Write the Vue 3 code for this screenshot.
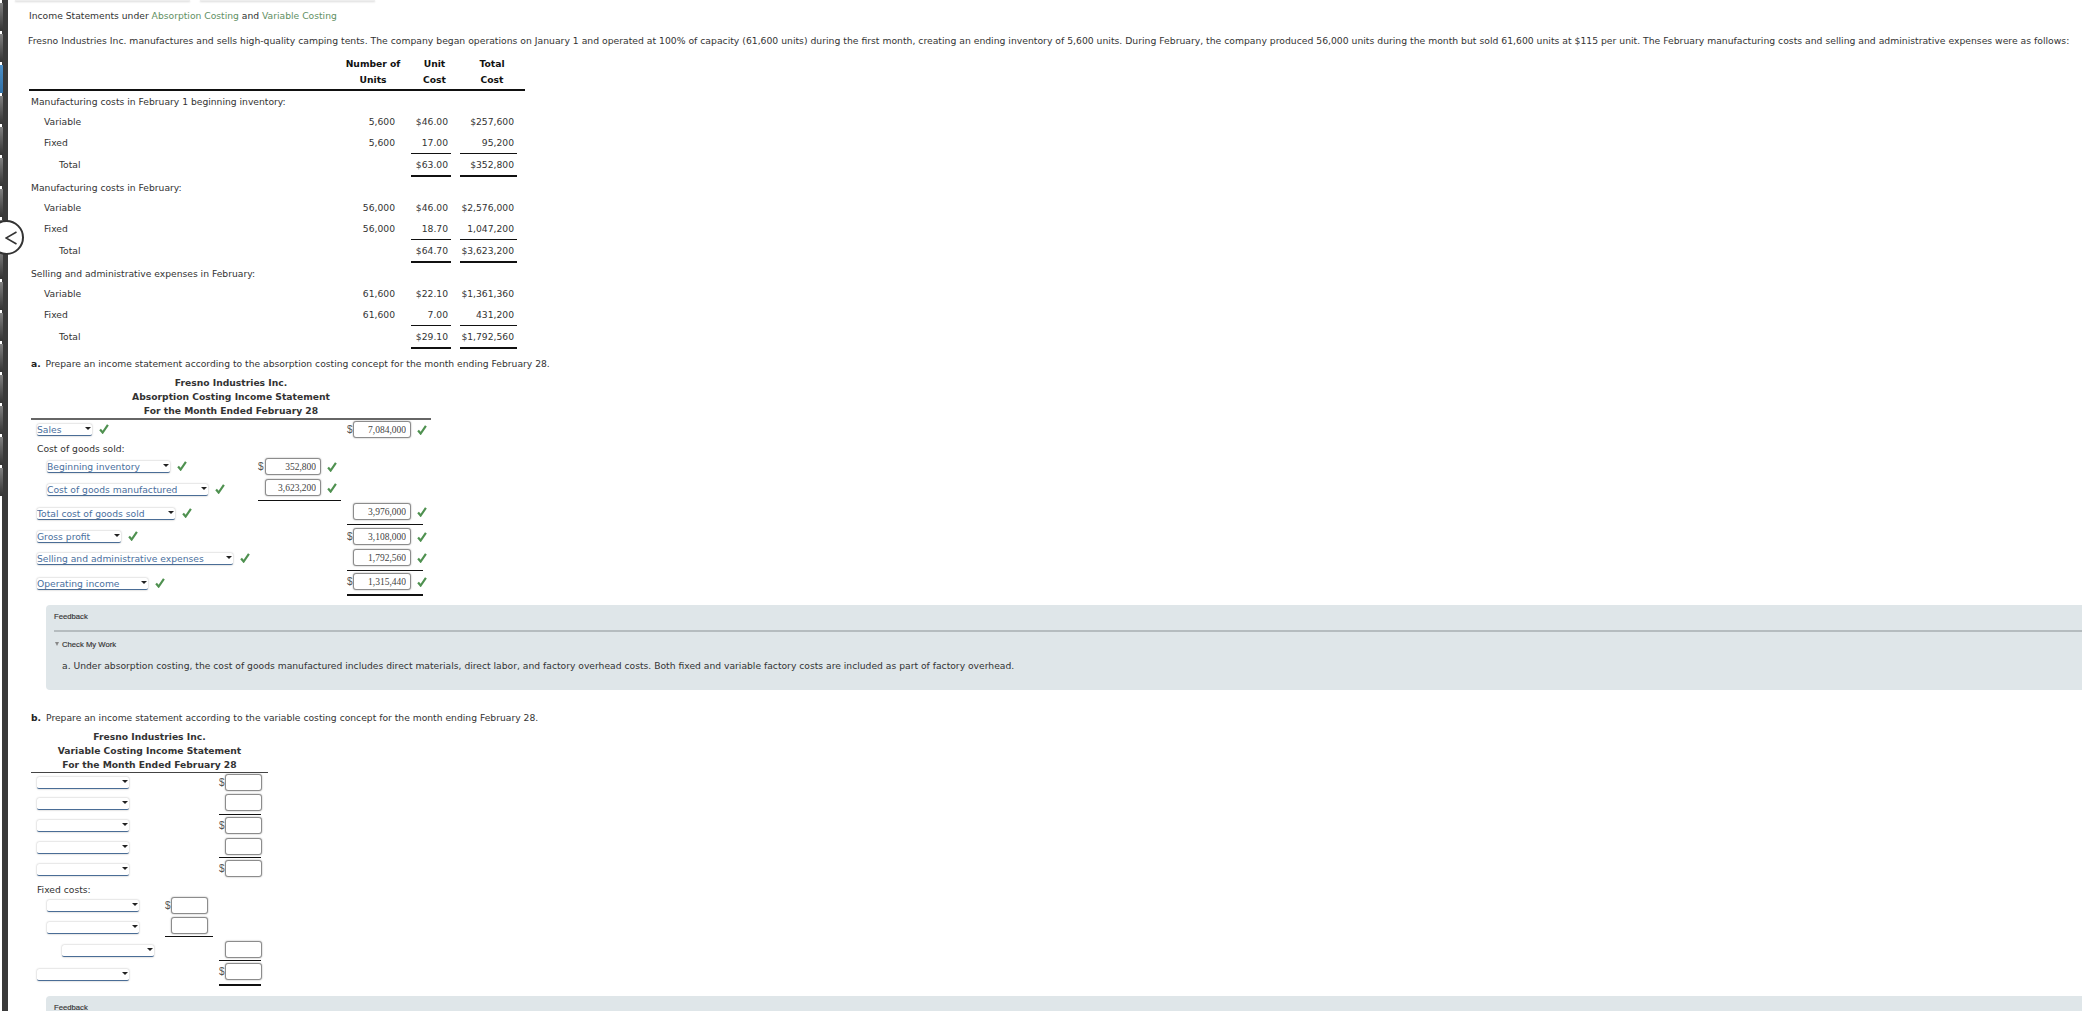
<script setup>
const thumbs = Array.from({ length: 16 }, (_, i) => i === 2)

const costSections = [
  { title: 'Manufacturing costs in February 1 beginning inventory:', rows: [
    ['5,600', '$46.00', '$257,600'], ['5,600', '17.00', '95,200'], ['$63.00', '$352,800'] ] },
  { title: 'Manufacturing costs in February:', rows: [
    ['56,000', '$46.00', '$2,576,000'], ['56,000', '18.70', '1,047,200'], ['$64.70', '$3,623,200'] ] },
  { title: 'Selling and administrative expenses in February:', rows: [
    ['61,600', '$22.10', '$1,361,360'], ['61,600', '7.00', '431,200'], ['$29.10', '$1,792,560'] ] }
]

const absorption = [
  { h: 22, level: 0, sel: 'Sales', w: 55, st: 4, col: 'right', top: 1, val: '7,084,000', dollar: true },
  { h: 14, text: 'Cost of goods sold:' },
  { h: 21, level: 1, sel: 'Beginning inventory', w: 123, st: 5, col: 'mid', top: 2, val: '352,800', dollar: true },
  { h: 24, level: 1, sel: 'Cost of goods manufactured', w: 161, st: 7, col: 'mid', top: 2, val: '3,623,200', line: 1 },
  { h: 24, level: 0, sel: 'Total cost of goods sold', w: 138, st: 7, col: 'right', top: 2, val: '3,976,000', line: 1 },
  { h: 22, level: 0, sel: 'Gross profit', w: 84, st: 6, col: 'right', top: 3, val: '3,108,000', dollar: true },
  { h: 24, level: 0, sel: 'Selling and administrative expenses', w: 196, st: 6, col: 'right', top: 2, val: '1,792,560', line: 1 },
  { h: 25, level: 0, sel: 'Operating income', w: 111, st: 7, col: 'right', top: 2, val: '1,315,440', dollar: true, line: 2 }
]

const variable = [
  { h: 19, level: 0, sel: '', w: 92, st: 4, col: 'right', top: 1, val: '', dollar: true },
  { h: 23, level: 0, sel: '', w: 92, st: 6, col: 'right', top: 2, val: '', line: 1 },
  { h: 21, level: 0, sel: '', w: 92, st: 5, col: 'right', top: 2, val: '', dollar: true },
  { h: 22, level: 0, sel: '', w: 92, st: 6, col: 'right', top: 2, val: '', line: 1 },
  { h: 25, level: 0, sel: '', w: 92, st: 6, col: 'right', top: 2, val: '', dollar: true },
  { h: 12, text: 'Fixed costs:' },
  { h: 20, level: 1, sel: '', w: 92, st: 5, col: 'mid', top: 2, val: '', dollar: true },
  { h: 22, level: 1, sel: '', w: 92, st: 7, col: 'mid', top: 2, val: '', line: 1 },
  { h: 24, level: 2, sel: '', w: 92, st: 8, col: 'right', top: 4, val: '', line: 1 },
  { h: 25, level: 0, sel: '', w: 92, st: 8, col: 'right', top: 2, val: '', dollar: true, line: 2 }
]

const statements = [
  { key: 'a', cls: 'stmt-a', rows: absorption, titles: ['Fresno Industries Inc.', 'Absorption Costing Income Statement', 'For the Month Ended February 28'],
    prompt: 'Prepare an income statement according to the absorption costing concept for the month ending February 28.',
    detail: 'a. Under absorption costing, the cost of goods manufactured includes direct materials, direct labor, and factory overhead costs. Both fixed and variable factory costs are included as part of factory overhead.' },
  { key: 'b', cls: 'stmt-b', rows: variable, titles: ['Fresno Industries Inc.', 'Variable Costing Income Statement', 'For the Month Ended February 28'],
    prompt: 'Prepare an income statement according to the variable costing concept for the month ending February 28.',
    detail: '' }
]
</script>

<template>
  <div class="page">
    <div class="rail">
      <div class="thumbs">
        <div v-for="(blue, i) in thumbs" :key="i" class="thumb" :class="{ blue }"></div>
      </div>
    </div>
    <button class="back" aria-label="Previous">
      <svg width="12" height="16" viewBox="0 0 12 16"><path d="M11.5 2 L1 8 L11.5 14" fill="none" stroke="#333" stroke-width="1.6"/></svg>
    </button>

    <main class="main">
      <div class="tabs"><span class="tab t1"></span><span class="tab t2"></span></div>
      <p class="heading">Income Statements under <a class="link">Absorption Costing</a> and <a class="link">Variable Costing</a></p>
      <p class="intro">Fresno Industries Inc. manufactures and sells high-quality camping tents. The company began operations on January 1 and operated at 100% of capacity (61,600 units) during the first month, creating an ending inventory of 5,600 units. During February, the company produced 56,000 units during the month but sold 61,600 units at $115 per unit. The February manufacturing costs and selling and administrative expenses were as follows:</p>

      <div class="cost-table">
        <div class="cost-head">
          <span></span>
          <span>Number of<br>Units</span>
          <span>Unit<br>Cost</span>
          <span>Total<br>Cost</span>
        </div>
        <template v-for="s in costSections" :key="s.title">
          <div class="cost-section">{{ s.title }}</div>
          <div class="cost-row r-var">
            <span class="lbl l1">Variable</span>
            <span class="num">{{ s.rows[0][0] }}</span>
            <span class="num c2">{{ s.rows[0][1] }}</span>
            <span class="num c3">{{ s.rows[0][2] }}</span>
          </div>
          <div class="cost-row r-fix">
            <span class="lbl l1">Fixed</span>
            <span class="num">{{ s.rows[1][0] }}</span>
            <span class="num c2 under">{{ s.rows[1][1] }}</span>
            <span class="num c3 under">{{ s.rows[1][2] }}</span>
          </div>
          <div class="cost-row r-tot">
            <span class="lbl l2">Total</span>
            <span></span>
            <span class="num c2 dbl">{{ s.rows[2][0] }}</span>
            <span class="num c3 dbl">{{ s.rows[2][1] }}</span>
          </div>
        </template>
      </div>

      <section v-for="st in statements" :key="st.key" class="part" :class="st.cls">
        <p class="prompt"><b>{{ st.key }}.</b> {{ st.prompt }}</p>
        <div class="stmt">
          <div class="stmt-title">
            <div v-for="t in st.titles" :key="t">{{ t }}</div>
          </div>
          <div v-for="(r, i) in st.rows" :key="i" class="stmt-row" :style="{ height: r.h + 'px' }">
            <div v-if="r.text" class="plain">{{ r.text }}</div>
            <template v-else>
              <div class="label-cell" :class="'lv' + r.level" :style="{ paddingTop: r.st + 'px' }">
                <span class="pick" :style="{ width: r.w + 'px' }">
                  <select class="native" :aria-label="r.sel || 'Select'"><option>{{ r.sel }}</option></select>
                </span>
                <svg v-if="r.sel" class="check" width="10" height="10" viewBox="0 0 11 11"><path d="M1.2 6 L4 9.4 L9.8 1" fill="none" stroke="#4f9150" stroke-width="2.4"/></svg>
              </div>
              <div class="cell mid" :class="r.col === 'mid' ? ['filled', 'ln' + (r.line || 0)] : ''" :style="{ paddingTop: r.top + 'px' }">
                <div v-if="r.col === 'mid'" class="field">
                  <span class="slot">{{ r.dollar ? '$' : '' }}</span>
                  <input class="box" :value="r.val" readonly aria-label="Amount">
                  <svg v-if="r.val" class="check" width="10" height="10" viewBox="0 0 11 11"><path d="M1.2 6 L4 9.4 L9.8 1" fill="none" stroke="#4f9150" stroke-width="2.4"/></svg>
                </div>
              </div>
              <div class="cell right" :class="r.col === 'right' ? ['filled', 'ln' + (r.line || 0)] : ''" :style="{ paddingTop: r.top + 'px' }">
                <div v-if="r.col === 'right'" class="field">
                  <span class="slot">{{ r.dollar ? '$' : '' }}</span>
                  <input class="box" :value="r.val" readonly aria-label="Amount">
                  <svg v-if="r.val" class="check" width="10" height="10" viewBox="0 0 11 11"><path d="M1.2 6 L4 9.4 L9.8 1" fill="none" stroke="#4f9150" stroke-width="2.4"/></svg>
                </div>
              </div>
            </template>
          </div>
        </div>
        <div class="feedback">
          <div class="fb-title">Feedback</div>
          <div class="fb-rule"></div>
          <template v-if="st.detail">
            <div class="fb-check"><i class="tri"></i>Check My Work</div>
            <div class="fb-detail">{{ st.detail }}</div>
          </template>
        </div>
      </section>
    </main>
  </div>
</template>

<style>
html, body { margin: 0; background: #fff; }
</style>

<style scoped>
.page {
  position: relative;
  display: flex;
  height: 1011px;
  overflow: hidden;
  background: #fff;
  color: #333;
  font-family: "DejaVu Sans", Verdana, sans-serif;
  font-size: 9.2px;
  line-height: 14px;
}
.rail {
  flex: 0 0 8px;
  display: flex;
  background: linear-gradient(to right, #fff 2.5px, #3a3a3a 2.5px);
}
.thumbs { width: 2.5px; padding-top: 3px; display: flex; flex-direction: column; }
.thumb {
  height: 28px;
  margin-bottom: 3px;
  background: linear-gradient(#808080, #333);
}
.thumb.blue { background: linear-gradient(#4d90c8, #2f6fa5); }
.back {
  position: absolute;
  left: -11px;
  top: 220px;
  width: 35px;
  height: 35px;
  box-sizing: border-box;
  border: 2px solid #333;
  border-radius: 50%;
  background: #fff;
  padding: 0 0 0 9px;
  display: flex;
  align-items: center;
  justify-content: center;
}
.main { flex: 1; min-width: 0; padding-left: 20px; }
.tabs { display: flex; height: 1px; margin-left: -20px; }
.tab { height: 1px; background: #eee; box-shadow: 0 1px 2px #ccc; }
.t1 { width: 175px; margin-left: 7px; }
.t2 { width: 175px; margin-left: 10px; }
p { margin: 0; white-space: nowrap; }
.heading { margin-top: 8px; padding-left: 1px; }
.link { color: #5f9063; }
.intro { margin-top: 11px; font-size: 9.25px; }

.cost-table { width: 496px; margin: 8px 0 0 1px; }
.cost-head {
  display: grid;
  grid-template-columns: 311px 66px 57px 58px;
  padding-bottom: 1px;
  border-bottom: 2px solid #111;
  font-weight: 700;
  line-height: 16px;
  text-align: center;
  color: #111;
}
.cost-section { height: 21px; line-height: 21px; padding-left: 2px; }
.cost-row {
  display: grid;
  grid-template-columns: 300px 66px 56px 66px;
  box-sizing: border-box;
}
.r-var { height: 20px; line-height: 20px; }
.r-fix { height: 22px; line-height: 21px; }
.r-tot { height: 23px; line-height: 21px; }
.lbl.l1 { padding-left: 15px; }
.lbl.l2 { padding-left: 30px; }
.num { text-align: right; }
.c2 { padding-right: 3px; box-sizing: border-box; width: 40px; justify-self: end; }
.c3 { padding-right: 3px; box-sizing: border-box; width: 57px; justify-self: end; }
.under { border-bottom: 1px solid #111; height: 22px; }
.dbl { border-bottom: 2px solid #111; height: 23px; }

.part { margin-top: 8px; }
.part.stmt-b { margin-top: 21px; }
.prompt { padding-left: 3px; }
.prompt b { color: #222; margin-right: 2px; }
.stmt { margin: 5px 0 0 3px; }
.stmt-a .stmt { width: 400px; }
.stmt-b .stmt { width: 237px; }
.stmt-title {
  text-align: center;
  font-weight: 700;
  border-bottom: 2px solid #666;
}
.stmt-b .stmt-title { border-bottom: 1.5px solid #444; }
.stmt-row { display: grid; }
.stmt-a .stmt-row { grid-template-columns: 227px 83px 82px; }
.stmt-b .stmt-row { grid-template-columns: 134px 48px 48px; }
.cell.right { margin-left: 6px; }
.plain { grid-column: 1 / -1; padding-left: 6px; align-self: center; }
.label-cell { display: flex; align-items: flex-start; gap: 7px; white-space: nowrap; }
.lv0 { padding-left: 6px; }
.lv1 { padding-left: 16px; }
.lv2 { padding-left: 31px; }
.pick {
  position: relative;
  display: block;
  height: 11px;
  flex: none;
}
.pick::after {
  content: "";
  position: absolute;
  right: 1.5px;
  top: 3px;
  border-left: 3px solid transparent;
  border-right: 3px solid transparent;
  border-top: 3.5px solid #222;
}
.native {
  appearance: none;
  -webkit-appearance: none;
  display: block;
  width: 100%;
  height: 11px;
  margin: 0;
  padding: 0;
  border: 0;
  border-bottom: 1.5px solid #4a6d96;
  border-radius: 2px;
  background: #fff;
  box-shadow: 0 0 2px #aaa;
  color: #4a6f9e;
  font-family: "DejaVu Sans", Verdana, sans-serif;
  font-size: 9.2px;
  line-height: 11px;
  box-sizing: content-box;
  overflow: hidden;
}
.check { flex: none; }
.cell { box-sizing: border-box; min-width: 0; }
.ln1 { border-bottom: 1px solid #111; }
.ln2 { border-bottom: 2px solid #111; }
.field { display: flex; align-items: center; height: 17px; }
.slot {
  flex: none;
  width: 6px;
  font-family: "Liberation Sans", Arial, sans-serif;
  font-size: 10px;
  color: #555;
  line-height: 17px;
}
.stmt-a .mid .slot { width: 7px; }
.box {
  flex: none;
  box-sizing: border-box;
  height: 17px;
  margin: 0 6px 0 0;
  padding: 0 4px 0 0;
  border: 1.5px solid #8c8c8c;
  border-radius: 3px;
  box-shadow: 0 0 1.5px #888;
  background: #fff;
  text-align: right;
  color: #444;
  font-family: "Liberation Serif", "Times New Roman", serif;
  font-size: 9.5px;
}
.stmt-a .mid .box { width: 56px; }
.stmt-a .right .box { width: 58px; }
.stmt-b .box { width: 37px; }

.feedback {
  margin: 9px 0 0 18px;
  padding: 6px 0 0 8px;
  height: 85px;
  box-sizing: border-box;
  background: #dfe6e9;
  border-radius: 4px 0 0 4px;
}
.stmt-b .feedback { margin-top: 10px; }
.fb-title, .fb-check {
  font-family: "Liberation Sans", Arial, sans-serif;
  font-size: 7.7px;
  line-height: 12px;
  color: #333;
  -webkit-text-stroke: 0.15px #333;
}
.fb-rule { height: 2px; margin-top: 7px; background: #b5bcbf; }
.fb-check { margin-top: 7px; position: relative; padding-left: 8px; }
.tri {
  position: absolute;
  left: 1px;
  top: 3px;
  border-left: 2px solid transparent;
  border-right: 2px solid transparent;
  border-top: 4px solid #888;
}
.fb-detail { margin-top: 8px; padding-left: 8px; white-space: nowrap; }
</style>
